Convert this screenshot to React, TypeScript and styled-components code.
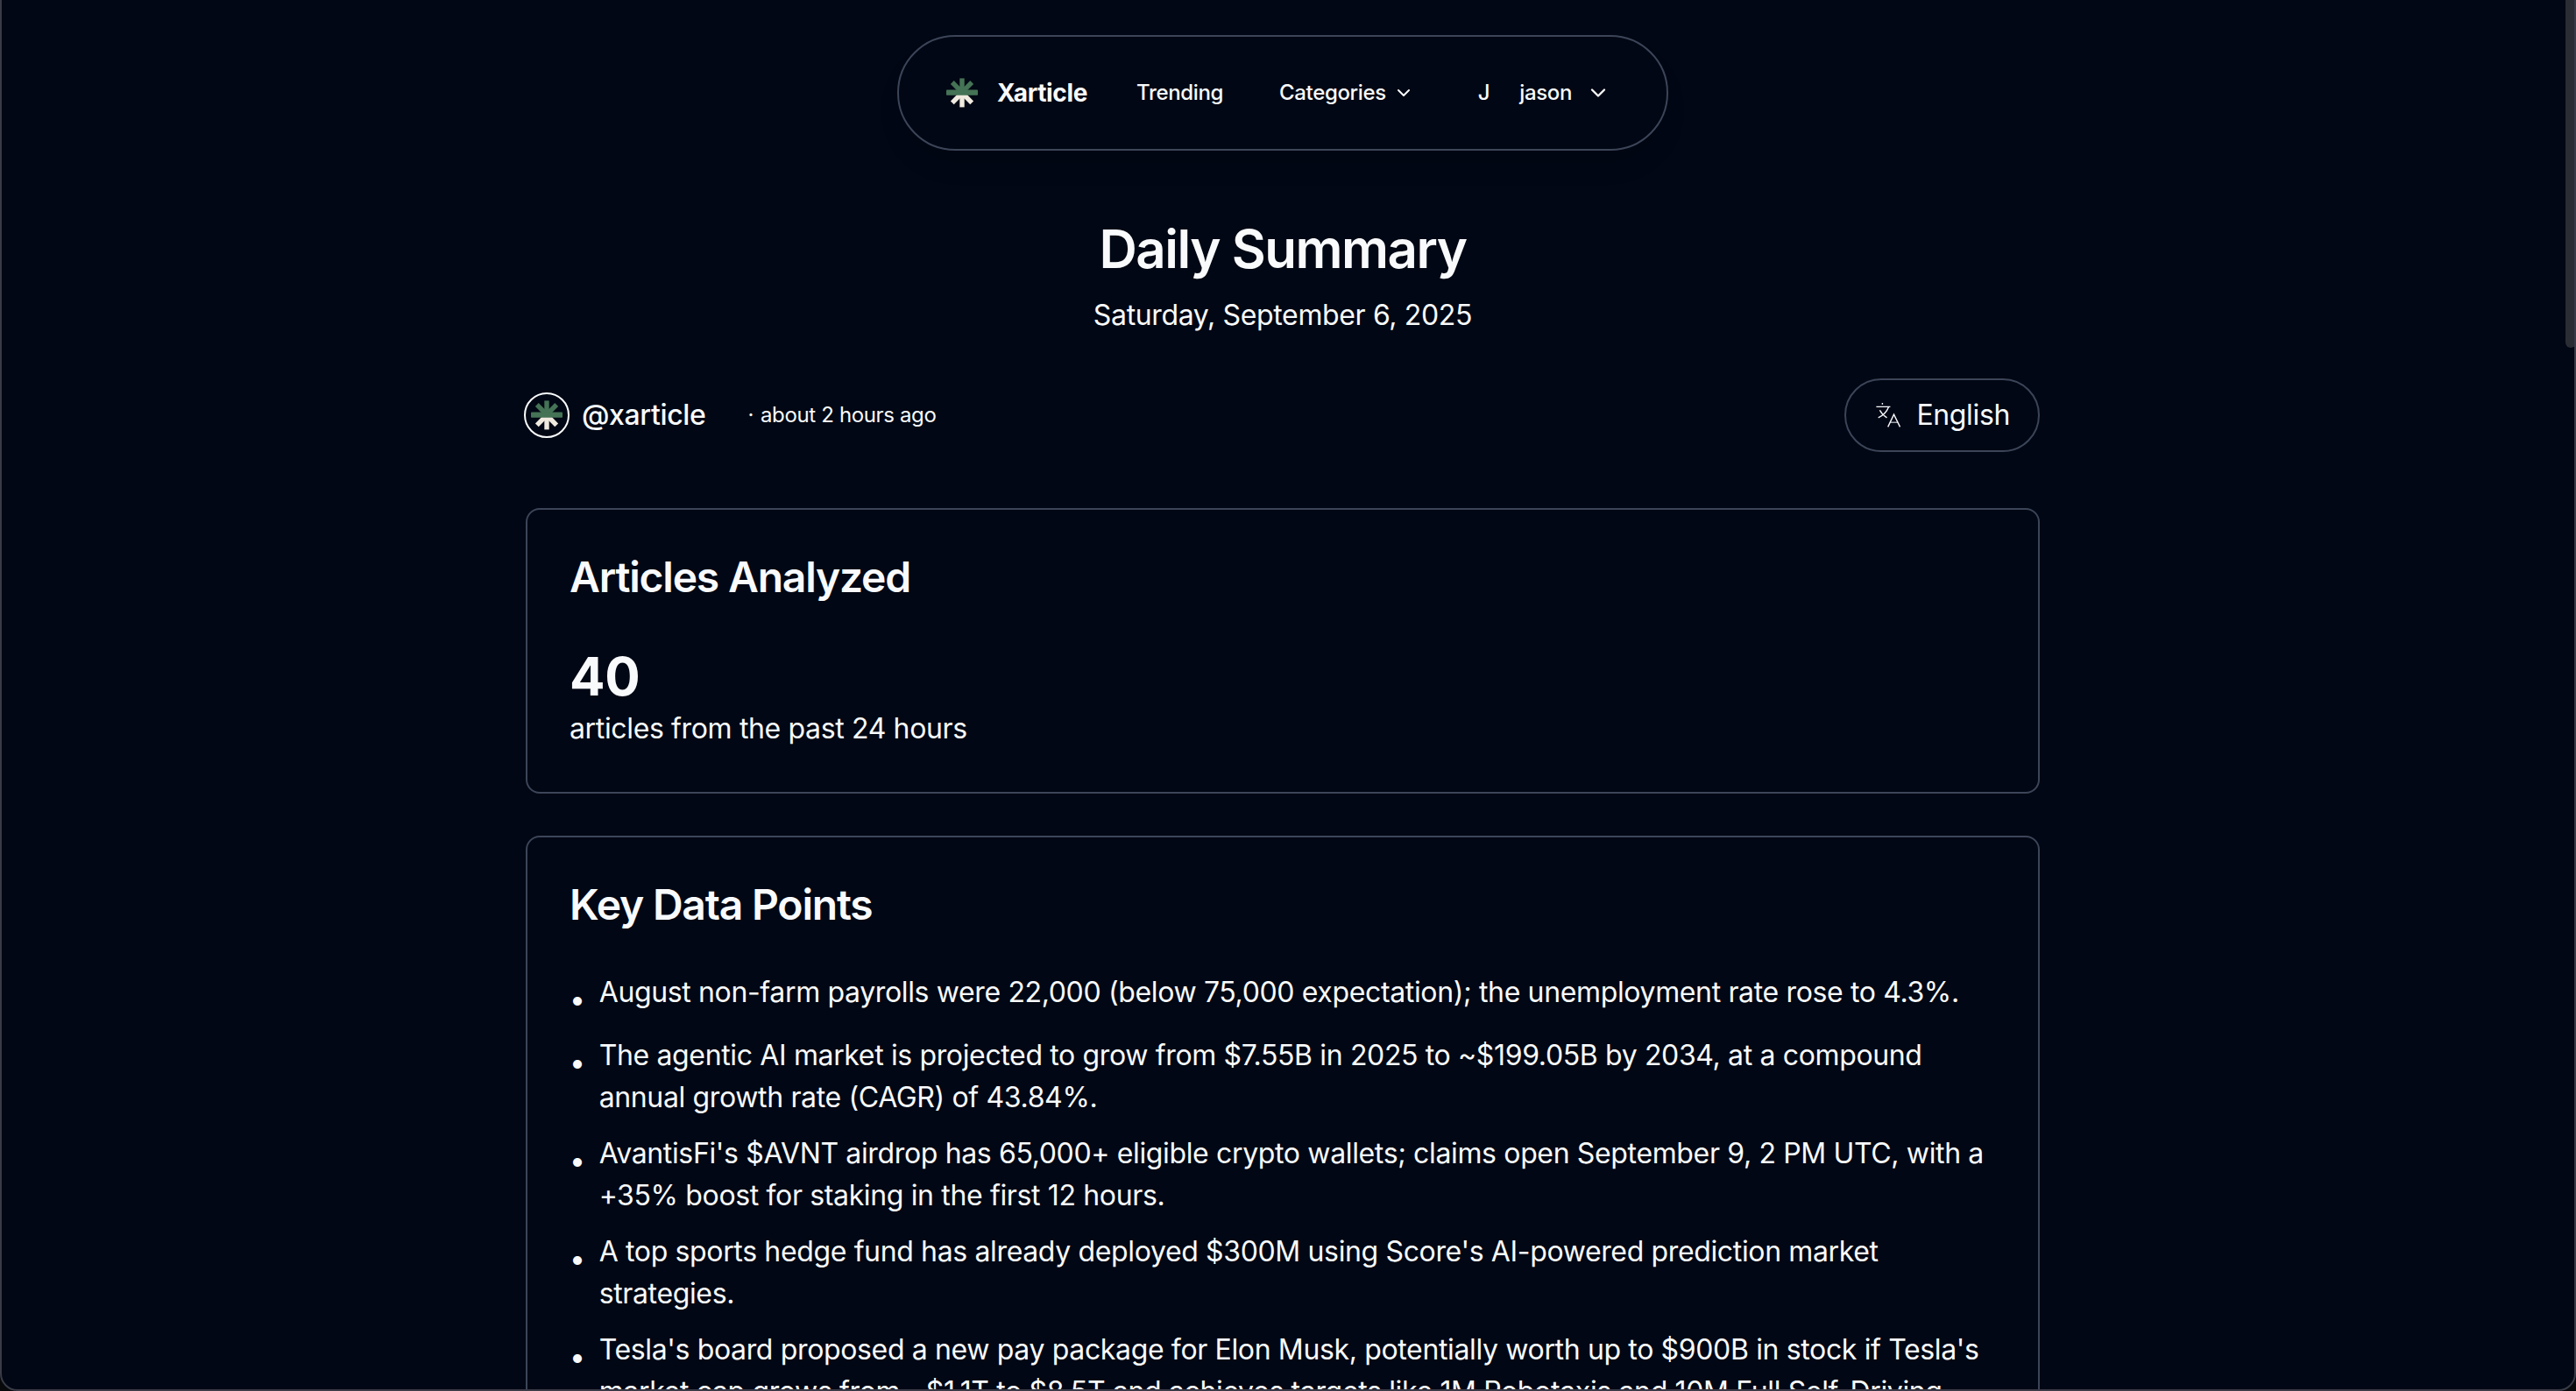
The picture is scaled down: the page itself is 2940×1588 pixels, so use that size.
import React from "react";
import styled, { createGlobalStyle } from "styled-components";

const GlobalStyle = createGlobalStyle`
  *, *::before, *::after { box-sizing: border-box; }
  html, body { margin: 0; padding: 0; background: #010714; }
  body {
    height: 1588px;
    overflow: hidden;
    color: #f8fafc;
    font-family: Inter, "Liberation Sans", sans-serif;
    font-size: 32px;
    line-height: 48px;
    letter-spacing: -0.356px;
    font-optical-sizing: none;
  }
  h1, h2, p, ul { margin: 0; padding: 0; }
  button { font: inherit; letter-spacing: inherit; color: inherit; background: none; border: 0; padding: 0; margin: 0; }
`;

const line = "#3c4558";

const Window = styled.div`
  position: relative;
  width: 2940px;
  height: 1588px;
  overflow: hidden;
  background: #010714;
`;

const WindowFrame = styled.div`
  position: absolute;
  inset: -2px 0 0 0;
  border: 2px solid #393b47;
  border-radius: 0 0 20px 20px;
  box-shadow: 0 0 0 30px #07090a;
  pointer-events: none;
`;

const ScrollThumb = styled.div`
  position: absolute;
  top: -8px;
  right: 0;
  width: 12px;
  height: 405px;
  border-radius: 6px;
  background: #2a2d34;
`;

const Page = styled.div`
  width: 2928px;
  display: flex;
  flex-direction: column;
  align-items: center;
  padding-top: 40px;
`;

const NavBar = styled.nav`
  display: flex;
  align-items: center;
  width: 880px;
  height: 132px;
  padding: 0 50px 0 54px;
  border: 2px solid ${line};
  border-radius: 66px;
  box-shadow: 0 20px 30px -6px rgba(0, 0, 0, 0.1);
  font-size: 24px;
  font-weight: 500;
  line-height: 32px;
`;

const Brand = styled.a`
  display: flex;
  align-items: center;
  gap: 22px;
  font-size: 28px;
  font-weight: 700;
`;

const NavItem = styled.a<{ $gap: number }>`
  display: flex;
  align-items: center;
  margin-left: ${(p) => p.$gap}px;
`;

const Chevron = styled.svg<{ $size: number; $gap: number }>`
  width: ${(p) => p.$size}px;
  height: ${(p) => p.$size}px;
  margin-left: ${(p) => p.$gap}px;
  fill: none;
  stroke: currentColor;
  stroke-width: 2;
  stroke-linecap: round;
  stroke-linejoin: round;
`;

const Content = styled.main`
  width: 1728px;
  display: flex;
  flex-direction: column;
`;

const Heading = styled.header`
  display: flex;
  flex-direction: column;
  align-items: center;
  gap: 16px;
  padding-top: 76px;
`;

const Title = styled.h1`
  font-size: 60px;
  font-weight: 600;
  line-height: 72px;
  letter-spacing: -0.025em;
`;

const Subtitle = styled.p``;

const MetaRow = styled.div`
  display: flex;
  align-items: center;
  justify-content: space-between;
  height: 84px;
  margin: 48px 0 64px;
`;

const Author = styled.div`
  display: flex;
  align-items: center;
  margin-left: -2px;
`;

const Avatar = styled.span`
  display: flex;
  align-items: center;
  justify-content: center;
  width: 52px;
  height: 52px;
  border: 2px solid #f8fafc;
  border-radius: 50%;
`;

const Handle = styled.span`
  margin-left: 14px;
  font-weight: 500;
`;

const Ago = styled.span`
  display: flex;
  gap: 8px;
  margin-left: 48px;
  font-size: 24px;
  line-height: 32px;
`;

const LanguageButton = styled.button`
  display: flex;
  align-items: center;
  gap: 16px;
  height: 84px;
  padding: 0 32px;
  border: 2px solid ${line};
  border-radius: 42px;
`;

const Card = styled.section`
  padding: 48px;
  border: 2px solid ${line};
  border-radius: 16px;
  margin-bottom: 48px;
`;

const CardTitle = styled.h2`
  font-size: 48px;
  font-weight: 600;
  line-height: 1.2;
  letter-spacing: -0.025em;
`;

const Count = styled.p`
  margin-top: 48px;
  font-size: 60px;
  font-weight: 700;
  line-height: 72px;
`;

const Points = styled.ul`
  display: flex;
  flex-direction: column;
  gap: 16px;
  margin-top: 48px;
  list-style: none;
`;

const Point = styled.li`
  display: flex;
  align-items: flex-start;
  gap: 16px;
`;

const Bullet = styled.span`
  margin-top: 8px;
`;

function Logo() {
  return (
    <svg width="36" height="34" viewBox="0 0 36 34">
      <g stroke="#f0eadf" strokeWidth="5.4">
        <path d="M18 17V33.4" />
        <path d="M18 17L6.8 28.4" />
        <path d="M18 17L29.2 28.4" />
      </g>
      <g stroke="#457355" strokeWidth="5.4">
        <path d="M18 17V0.4" />
        <path d="M18 16.4L6.8 5" />
        <path d="M18 16.4L29.2 5" />
      </g>
      <rect x="0" y="13.6" width="36" height="6.2" rx="0.8" fill="#457355" />
    </svg>
  );
}

function TranslateIcon() {
  return (
    <svg width="32" height="32" viewBox="0 0 32 32" fill="none" stroke="#f8fafc" strokeWidth="1.4">
      <path d="M9.4 2V3.8M2.4 6.4H18.4" />
      <path d="M16.4 6.8C14.7 11.5 10.9 16 4.7 18.9M6.4 10.2C8.1 13.6 10.7 16.4 14.5 18.9" />
      <path d="M15.7 29.4L22.5 15.2L29.5 29.4" />
      <path d="M18.1 24.2H26.9" opacity="0.7" />
    </svg>
  );
}

const points = [
  "August non-farm payrolls were 22,000 (below 75,000 expectation); the unemployment rate rose to 4.3%.",
  "The agentic AI market is projected to grow from $7.55B in 2025 to ~$199.05B by 2034, at a compound annual growth rate (CAGR) of 43.84%.",
  "AvantisFi's $AVNT airdrop has 65,000+ eligible crypto wallets; claims open September 9, 2 PM UTC, with a +35% boost for staking in the first 12 hours.",
  "A top sports hedge fund has already deployed $300M using Score's AI-powered prediction market strategies.",
  "Tesla's board proposed a new pay package for Elon Musk, potentially worth up to $900B in stock if Tesla's market cap grows from ~$1.1T to $8.5T and achieves targets like 1M Robotaxis and 10M Full Self-Driving",
];

export default function App() {
  return (
    <Window>
      <GlobalStyle />
      <Page>
        <NavBar>
          <Brand>
            <Logo />
            Xarticle
          </Brand>
          <NavItem $gap={56}>Trending</NavItem>
          <NavItem $gap={64}>
            Categories
            <Chevron viewBox="0 0 24 24" $size={24} $gap={8}>
              <path d="m6 9 6 6 6-6" />
            </Chevron>
          </NavItem>
          <NavItem $gap={73}>J</NavItem>
          <NavItem $gap={34}>
            jason
            <Chevron viewBox="0 0 24 24" $size={28} $gap={16}>
              <path d="m6 9 6 6 6-6" />
            </Chevron>
          </NavItem>
        </NavBar>
        <Content>
          <Heading>
            <Title>Daily Summary</Title>
            <Subtitle>Saturday, September 6, 2025</Subtitle>
          </Heading>
          <MetaRow>
            <Author>
              <Avatar>
                <Logo />
              </Avatar>
              <Handle>@xarticle</Handle>
              <Ago>
                <span>·</span>
                <span>about 2 hours ago</span>
              </Ago>
            </Author>
            <LanguageButton>
              <TranslateIcon />
              English
            </LanguageButton>
          </MetaRow>
          <Card>
            <CardTitle>Articles Analyzed</CardTitle>
            <Count>40</Count>
            <p>articles from the past 24 hours</p>
          </Card>
          <Card>
            <CardTitle>Key Data Points</CardTitle>
            <Points>
              {points.map((text) => (
                <Point key={text}>
                  <Bullet>•</Bullet>
                  <span>{text}</span>
                </Point>
              ))}
            </Points>
          </Card>
        </Content>
      </Page>
      <ScrollThumb />
      <WindowFrame />
    </Window>
  );
}
